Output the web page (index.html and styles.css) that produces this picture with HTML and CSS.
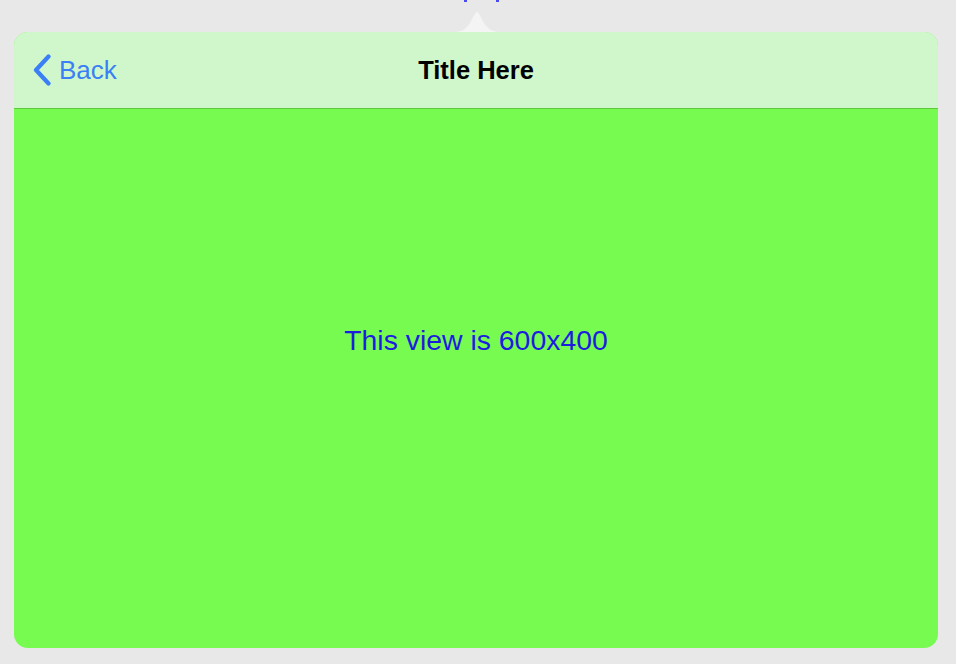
FILE: index.html
```html
<!DOCTYPE html>
<html>
<head>
<meta charset="utf-8">
<link rel="stylesheet" href="styles.css">
</head>
<body>
<div class="screen">
  <div class="topmarks"><span class="mark m1"></span><span class="mark m2"></span></div>
  <svg class="arrow" width="48" height="21" viewBox="0 0 48 21">
    <path d="M0 21 C8 21 12 19 17 12 C20 7 22 1 24 1 C26 1 28 7 31 12 C36 19 40 21 48 21 Z" fill="#f4f4f4"/>
  </svg>
  <div class="popover">
    <div class="navbar">
      <div class="back">
        <svg class="chev" width="20" height="32" viewBox="0 0 20 32">
          <path d="M16.5 2.5 L4 16 L16.5 29.5" fill="none" stroke="#3a7ff5" stroke-width="4.2" stroke-linecap="round" stroke-linejoin="round"/>
        </svg>
        <span class="backtext">Back</span>
      </div>
      <div class="title">Title Here</div>
    </div>
    <div class="content">
      <div class="label">This view is 600x400</div>
    </div>
  </div>
</div>
</body>
</html>
```

FILE: styles.css
```css
html, body {
  margin: 0;
  padding: 0;
}
body {
  background: #e8e8e8;
  font-family: "Liberation Sans", Arial, sans-serif;
  width: 956px;
  height: 664px;
  overflow: hidden;
}
.screen {
  position: relative;
  width: 956px;
  height: 664px;
  padding: 32px 18px 16px 14px;
  box-sizing: border-box;
}
.topmarks .mark {
  position: absolute;
  top: 0;
  width: 3px;
  height: 2px;
  background: #4a4af0;
}
.topmarks .m1 { left: 464px; }
.topmarks .m2 { left: 496px; }
.arrow {
  position: absolute;
  left: 453px;
  top: 11px;
}
.popover {
  height: 616px;
  border-radius: 14px;
  overflow: hidden;
  display: flex;
  flex-direction: column;
  background: #77fb50;
}
.navbar {
  position: relative;
  height: 76px;
  flex: 0 0 76px;
  background: #d0f7cb;
  border-bottom: 1px solid #5fc83e;
  display: flex;
  align-items: center;
  justify-content: center;
}
.back {
  position: absolute;
  left: 18px;
  top: 22px;
  display: flex;
  align-items: center;
  gap: 7px;
  color: #3a7ff5;
}
.chev {
  display: block;
}
.backtext {
  font-size: 26px;
  line-height: 32px;
  color: #3a7ff5;
}
.title {
  font-size: 25.5px;
  font-weight: bold;
  color: #000;
  margin-top: 1px;
}
.content {
  flex: 1;
  display: flex;
  align-items: center;
  justify-content: center;
  padding-bottom: 77px;
}
.label {
  font-size: 28.4px;
  color: #1c1ce0;
  margin-left: 0;
}
```
